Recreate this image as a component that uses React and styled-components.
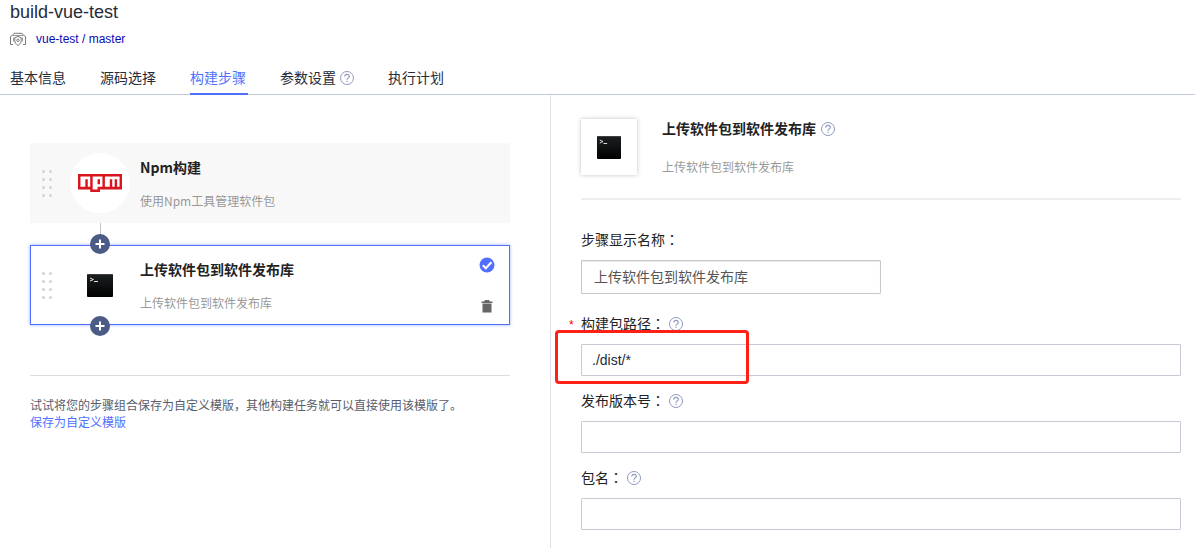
import { useState } from "react";
import styled, { createGlobalStyle } from "styled-components";

const GlobalStyle = createGlobalStyle`
  * {
    box-sizing: border-box;
  }

  body {
    margin: 0;
    background: #fff;
    color: #252b3a;
    font-family: "Noto Sans CJK SC", sans-serif;
    font-size: 14px;
    line-height: 20px;
  }

  h1, h2, h3, p {
    margin: 0;
  }

  a {
    text-decoration: none;
  }
`;

const Header = styled.header`
  padding: 0 10px;
  border-bottom: 1px solid #c3cad9;
`;

const PageTitle = styled.h1`
  font-family: "Liberation Sans", Arial, sans-serif;
  font-size: 18px;
  font-weight: 400;
  line-height: 24px;
`;

const Repo = styled.div`
  display: flex;
  align-items: center;
  gap: 10px;
  padding-top: 5px;

  a {
    font-family: "Liberation Sans", Arial, sans-serif;
    font-size: 12px;
    color: #0a0ab4;
  }
`;

const Tabs = styled.nav`
  display: flex;
  gap: 32px;
  margin-top: 15px;
`;

const Tab = styled.a`
  display: flex;
  align-items: center;
  gap: 4px;
  height: 31px;
  margin-bottom: -1px;
  padding: 0 2px 4px 0;
  color: ${(props) => (props.$active ? "#5170ff" : "#252b3a")};
  border-bottom: 2px solid
    ${(props) => (props.$active ? "#5170ff" : "transparent")};
`;

const Main = styled.main`
  display: flex;
  min-height: calc(100vh - 95px);
`;

const StepsPane = styled.section`
  flex: 0 1 550px;
  padding: 48px 40px 0 30px;
`;

const StepCard = styled.article`
  position: relative;
  display: flex;
  height: 80px;
  padding: 0 15px 0 11px;
  background: ${(props) => (props.$selected ? "#fff" : "#f8f8f8")};
  box-shadow: ${(props) =>
    props.$selected
      ? "inset 0 0 0 1px #5170ff, 0 0 3px rgba(81, 112, 255, 0.6)"
      : "none"};
`;

const Connector = styled.div`
  width: 1px;
  height: 22px;
  margin-left: 70px;
  background: #c4c4c4;
`;

const Grip = styled.div`
  display: grid;
  grid-template-columns: 3px 3px;
  gap: 5px 4px;
  align-content: center;
  width: 29px;
  padding-left: 1px;

  i {
    width: 3px;
    height: 3px;
    border-radius: 50%;
    background: #d3d3d3;
  }
`;

const StepIcon = styled.div`
  display: flex;
  align-items: center;
  justify-content: center;
  align-self: center;
  width: 60px;
  height: 60px;
  border-radius: 50%;
  background: #fff;
`;

const StepText = styled.div`
  flex: 1;
  padding: 15px 0 0 10px;
`;

const StepTitle = styled.h3`
  display: flex;
  align-items: center;
  gap: 5px;
  font-size: 14px;
  font-weight: 700;
  line-height: 18px;
  color: #222;
`;

const StepDesc = styled.p`
  margin-top: ${(props) => props.$gap || "15px"};
  font-size: 12px;
  line-height: 20px;
  color: #999;
`;

const StepActions = styled.div`
  display: flex;
  flex-direction: column;
  align-items: center;
  justify-content: space-between;
  padding: 12px 0;
`;

const IconButton = styled.button`
  display: flex;
  padding: 0;
  border: 0;
  background: none;
  cursor: pointer;
`;

const AddButton = styled(IconButton)`
  position: absolute;
  left: 60px;
  ${(props) => (props.$edge === "top" ? "top: -11px;" : "bottom: -11px;")}
`;

const SaveHint = styled.div`
  margin-top: 50px;
  padding-top: 20px;
  border-top: 1px solid #dcdcdc;
  font-size: 12px;
  line-height: 17px;
  color: #575d6c;

  a {
    color: #5170ff;
  }
`;

const DetailPane = styled.section`
  flex: 1;
  margin-top: -2px;
  padding: 26px 14px 0 30px;
  border-left: 1px solid #dfe1e6;
`;

const DetailHead = styled.div`
  display: flex;
  gap: 25px;
  padding-bottom: 21px;
  border-bottom: 2px solid #eee;
`;

const Thumb = styled.div`
  display: flex;
  align-items: center;
  justify-content: center;
  width: 56px;
  height: 56px;
  background: #fff;
  box-shadow: 0 0 4px rgba(0, 0, 0, 0.25);
`;

const Form = styled.form`
  padding-top: 30px;
`;

const Field = styled.div`
  margin-bottom: ${(props) => (props.$wide ? "15px" : "20px")};
`;

const LabelRow = styled.div`
  display: flex;
  align-items: center;
  height: 18px;
  margin-bottom: 12px;
  color: #222;

  label {
    margin-right: 4px;
  }
`;

// the TC face centres the full-width colon in its box
const Colon = styled.span`
  font-family: "Noto Sans CJK TC", sans-serif;
`;

const Required = styled.span`
  width: 12px;
  margin-left: -12px;
  padding-top: 4px;
  font-family: "Liberation Sans", Arial, sans-serif;
  font-size: 12px;
  color: #f00;
`;

const InputWrap = styled.div`
  position: relative;
`;

const Input = styled.input`
  display: block;
  width: 100%;
  height: 32px;
  padding: 0 10px;
  border: 1px solid #c8cbd6;
  border-radius: 1px;
  outline: 0;
  background: #fff;
  color: #252b3a;
  font-family: "Liberation Sans", "Noto Sans CJK SC", sans-serif;
  font-size: 14px;
`;

const NameInput = styled(Input)`
  max-width: 300px;
  height: 34px;
  padding: 0 12px 2px;
  border-color: #c8c8c8;
  box-shadow: inset 0 1px 1px rgba(0, 0, 0, 0.08);
  color: #555;
`;

const Highlight = styled.span`
  position: absolute;
  top: -14px;
  left: -26px;
  width: 194px;
  height: 54px;
  border: 3px solid #ff2116;
  border-radius: 4px;
  pointer-events: none;
`;

const HelpSvg = styled.svg`
  flex: none;
  margin-top: 2px;
`;

const RepoIcon = () => (
  <svg width="16" height="14" viewBox="0 0 16 14" fill="none" stroke="#777">
    <path d="M3 12.500H.5V4.500L2.500 3.200 4 1.300h8l1.500 1.900 2 1.300v8H13" />
    <path d="M2.500 3.500h11M3.500 5.500v4M12.500 5.500v4" stroke="#999" />
    <path d="M8 4.500l3.200 1.200v3c0 2-1.200 3.500-3.200 4.700-2-1.200-3.200-2.700-3.200-4.700v-3z" />
    <circle cx="8" cy="8.300" r="1.200" />
  </svg>
);

const HelpIcon = () => (
  <HelpSvg
    width="14"
    height="14"
    viewBox="0 0 14 14"
    fill="none"
    stroke="#8e9bbd"
  >
    <circle cx="7" cy="7" r="6.500" />
    <path
      d="M4.700 5.600C4.700 4.200 5.700 3.400 7 3.400s2.300.8 2.300 2C9.300 6.900 7 6.900 7 8.700M7 9.700v1.300"
      strokeWidth="1.200"
    />
  </HelpSvg>
);

const NpmLogo = () => (
  <svg width="44" height="18" viewBox="0 0 18 7" preserveAspectRatio="none">
    <path fill="#fff" d="M0 0h18v6H9v1H5V6H0z" />
    <path
      fill="#d9151f"
      d="M0 0h18v6H9v1H5V6H0V0zm1 5h2V2h1v3h1V1H1v4zm5-4v5h2V5h2V1H6zm2 1h1v2H8V2zm3-1v4h2V2h1v3h1V2h1v3h1V1h-6z"
    />
  </svg>
);

const TerminalIcon = ({ width }) => (
  <svg width={width} height="23" viewBox="0 0 26 23" preserveAspectRatio="none">
    <defs>
      <linearGradient id="screen" x1="0" y1="0" x2="0" y2="1">
        <stop offset="0" stopColor="#1c2022" />
        <stop offset="1" stopColor="#000" />
      </linearGradient>
    </defs>
    <rect width="26" height="23" rx="1" fill="url(#screen)" />
    <rect width="26" height="1" fill="#555" opacity="0.6" />
    <path d="M3 4l3.500 1.500L3 7M7 7.500h4" fill="none" stroke="#e4e4e4" />
  </svg>
);

const PlusIcon = () => (
  <svg width="20" height="20" viewBox="0 0 20 20">
    <circle cx="10" cy="10" r="10" fill="#4b5b85" />
    <path d="M10 5.500v9M5.500 10h9" stroke="#fff" strokeWidth="2" />
  </svg>
);

const CheckIcon = () => (
  <svg width="16" height="16" viewBox="0 0 16 16">
    <circle cx="8" cy="8" r="7.500" fill="#5170ff" />
    <path d="M3.800 8.200l3 3 5.600-6" fill="none" stroke="#fff" strokeWidth="2" />
  </svg>
);

const TrashIcon = () => (
  <svg width="12" height="13" viewBox="0 0 12 13" fill="#666">
    <path d="M4 0h4l1 1.500h2.500V3H.5V1.500H3zM1.500 3.500h9v9h-9z" />
  </svg>
);

const DragHandle = () => (
  <Grip>
    {Array.from({ length: 8 }).map((_, i) => (
      <i key={i} />
    ))}
  </Grip>
);

const tabs = ["基本信息", "源码选择", "构建步骤", "参数设置", "执行计划"];

export default function App() {
  const [active, setActive] = useState("构建步骤");
  const [name, setName] = useState("上传软件包到软件发布库");
  const [path, setPath] = useState("./dist/*");

  return (
    <>
      <GlobalStyle />
      <Header>
        <PageTitle>build-vue-test</PageTitle>
        <Repo>
          <RepoIcon />
          <a href="#repo">vue-test / master</a>
        </Repo>
        <Tabs>
          {tabs.map((tab) => (
            <Tab
              key={tab}
              href={`#${tab}`}
              $active={tab === active}
              onClick={() => setActive(tab)}
            >
              {tab}
              {tab === "参数设置" && <HelpIcon />}
            </Tab>
          ))}
        </Tabs>
      </Header>
      <Main>
        <StepsPane>
          <StepCard>
            <DragHandle />
            <StepIcon>
              <NpmLogo />
            </StepIcon>
            <StepText>
              <StepTitle>Npm构建</StepTitle>
              <StepDesc>使用Npm工具管理软件包</StepDesc>
            </StepText>
          </StepCard>
          <Connector />
          <StepCard $selected>
            <AddButton $edge="top" aria-label="在前面添加步骤">
              <PlusIcon />
            </AddButton>
            <DragHandle />
            <StepIcon>
              <TerminalIcon width="26" />
            </StepIcon>
            <StepText>
              <StepTitle>上传软件包到软件发布库</StepTitle>
              <StepDesc>上传软件包到软件发布库</StepDesc>
            </StepText>
            <StepActions>
              <CheckIcon />
              <IconButton aria-label="删除步骤">
                <TrashIcon />
              </IconButton>
            </StepActions>
            <AddButton $edge="bottom" aria-label="在后面添加步骤">
              <PlusIcon />
            </AddButton>
          </StepCard>
          <SaveHint>
            <p>
              试试将您的步骤组合保存为自定义模版，其他构建任务就可以直接使用该模版了。
            </p>
            <a href="#save">保存为自定义模版</a>
          </SaveHint>
        </StepsPane>
        <DetailPane>
          <DetailHead>
            <Thumb>
              <TerminalIcon width="24" />
            </Thumb>
            <div>
              <StepTitle>
                上传软件包到软件发布库
                <HelpIcon />
              </StepTitle>
              <StepDesc $gap="20px">上传软件包到软件发布库</StepDesc>
            </div>
          </DetailHead>
          <Form>
            <Field>
              <LabelRow>
                <label htmlFor="step-name">
                  步骤显示名称<Colon>：</Colon>
                </label>
              </LabelRow>
              <NameInput
                id="step-name"
                value={name}
                onChange={(e) => setName(e.target.value)}
              />
            </Field>
            <Field $wide>
              <LabelRow>
                <Required>*</Required>
                <label htmlFor="path">
                  构建包路径<Colon>：</Colon>
                </label>
                <HelpIcon />
              </LabelRow>
              <InputWrap>
                <Input
                  id="path"
                  value={path}
                  onChange={(e) => setPath(e.target.value)}
                />
                <Highlight />
              </InputWrap>
            </Field>
            <Field $wide>
              <LabelRow>
                <label htmlFor="version">
                  发布版本号<Colon>：</Colon>
                </label>
                <HelpIcon />
              </LabelRow>
              <Input id="version" />
            </Field>
            <Field $wide>
              <LabelRow>
                <label htmlFor="package">
                  包名<Colon>：</Colon>
                </label>
                <HelpIcon />
              </LabelRow>
              <Input id="package" />
            </Field>
          </Form>
        </DetailPane>
      </Main>
    </>
  );
}
